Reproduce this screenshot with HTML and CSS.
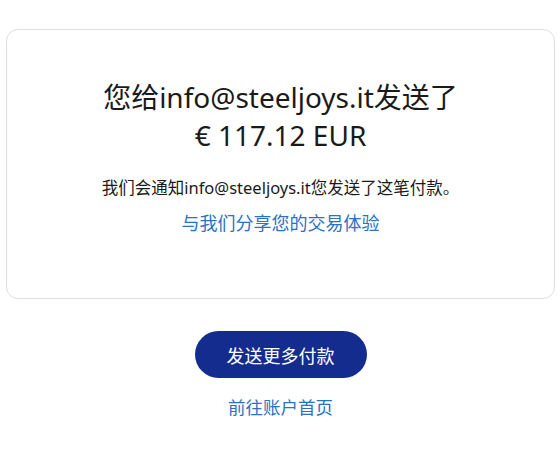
FILE: index.html
```html
<!DOCTYPE html>
<html lang="zh-CN">
<head>
    <meta charset="UTF-8">
    <meta name="viewport" content="width=device-width, initial-scale=1.0">
    <title>付款已发送</title>
    <link rel="stylesheet" href="styles.css">
</head>
<body>
    <div class="page">
        <div class="card">
            <h1 class="title">
                您给info@steeljoys.it发送了<br>
                € 117.12 EUR
            </h1>
            <p class="note">我们会通知info@steeljoys.it您发送了这笔付款。</p>
            <a class="link link-lg" href="#">与我们分享您的交易体验</a>
        </div>

        <div class="actions">
            <button class="btn-primary">发送更多付款</button>
            <a class="link" href="#">前往账户首页</a>
        </div>
    </div>
</body>
</html>
```

FILE: styles.css
```css
:root {
    --navy: #142c8e;
    --blue: #2a72c6;
    --text: #1a1a1a;
    --border: #dedede;
}

body {
    margin: 0;
    padding: 0;
    background: #fff;
    color: var(--text);
    font-family: "Noto Sans", "Noto Sans CJK SC", sans-serif;
}

.page {
    padding: 29px 2px 0 6px;
}

.card {
    border: 1px solid var(--border);
    border-radius: 12px;
    padding: 48px 20px 62px;
    text-align: center;
}

.title {
    margin: 0 0 21px;
    font-size: 28px;
    font-weight: 400;
    line-height: 38px;
}

.note {
    margin: 0 0 9px;
    font-size: 16.5px;
    line-height: 26px;
}

.link {
    color: var(--blue);
    text-decoration: none;
    font-size: 17.5px;
    line-height: 26px;
}

.link-lg {
    font-size: 18px;
}

.actions {
    display: flex;
    flex-direction: column;
    align-items: center;
    margin-top: 32px;
    gap: 16px;
}

.btn-primary {
    width: 172px;
    height: 47px;
    border: none;
    border-radius: 24px;
    background: var(--navy);
    color: #fff;
    font-family: inherit;
    font-size: 18px;
    cursor: pointer;
}
```
